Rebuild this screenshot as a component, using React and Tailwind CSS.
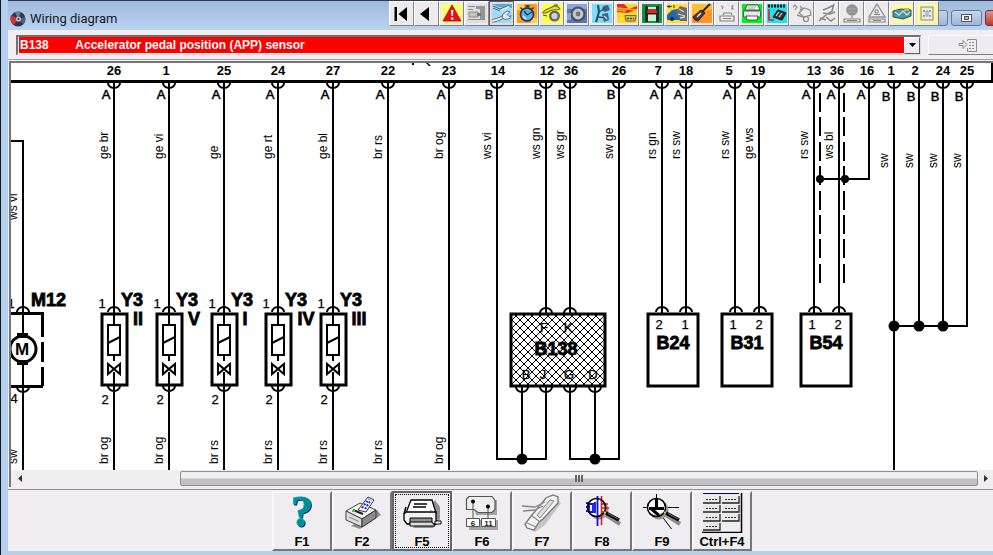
import React from "react";

const SANS = "'Liberation Sans', Arial, sans-serif";
const NARROW = "'Liberation Sans Narrow', 'Liberation Sans', Arial, sans-serif";

/* ---------- quick-access toolbar ---------- */

const Tile = ({ fill }) => <rect x="3" y="3" width="20" height="19" fill={fill} />;

const quickTools = [
  { name: "First", art: <path d="M5.500 6h2.500v14h-2.500zM18 6v14L9.500 13z" fill="#000" /> },
  { name: "Previous", art: <path d="M15 6v14L6 13z" fill="#000" /> },
  {
    name: "Warnings",
    art: (
      <>
        <Tile fill="#ffff6b" />
        <path d="M13 4l9 16H4z" fill="#e8101c" stroke="#b00" strokeWidth=".8" strokeLinejoin="round" />
        <path d="M12 9h2.400l-.6 6h-1.200zM12 16.500h2.400v2H12z" fill="#fff" />
      </>
    ),
  },
  {
    name: "Component data",
    art: (
      <>
        <Tile fill="#dedede" />
        <path d="M12 5h9v3h-9zM16 8h5v11h-5z" fill="#959595" />
        <path d="M4 5h7v1H4zM4 19h17v-1H4zM4 8h5v1H4z" fill="#8c8c8c" />
        <path d="M5 11h9v5H5z" fill="#c4c4c4" stroke="#8c8c8c" />
        <path d="M13 12h4v3h-4z" fill="#777" />
      </>
    ),
  },
  {
    name: "Repair",
    active: true,
    art: (
      <>
        <Tile fill="#a4d8f8" />
        <path d="M3 3h20v4L10 6z" fill="#5aa4dc" />
        <path d="M4 6l7 3 9-4" stroke="#e8eef2" strokeWidth="3" fill="none" />
        <path d="M4 5l7 3 9-4M4 7l7 3" stroke="#3f6f96" strokeWidth="1.200" fill="none" />
        <path d="M3 20c5-1 9-2 12-5" stroke="#5d6d78" strokeWidth="3.500" fill="none" />
        <path d="M3 20c5-1 9-2 12-5" stroke="#dfe5e8" strokeWidth="1.800" fill="none" />
        <path d="M14 13l4-3 3 1-3 2.500 2 2 2-1-1 3-5 1-3-2z" fill="#e6ebee" stroke="#5d6d78" strokeWidth=".9" />
      </>
    ),
  },
  {
    name: "Repair times",
    art: (
      <>
        <Tile fill="#ff9c1a" />
        <path d="M3 3h7v6H3zM17 17h6v5h-6z" fill="#ffd24a" />
        <circle cx="13" cy="13.500" r="6.500" fill="#5cb0e4" stroke="#1b3150" strokeWidth="1.500" />
        <path d="M11.500 4h4v3h-4z" fill="#3a4756" />
        <path d="M6.500 6.500l2 2M19.500 6.500l-2 2" stroke="#333" strokeWidth="1.500" />
        <path d="M10 10l3 4 5-3" stroke="#16304e" strokeWidth="1.300" fill="none" />
        <path d="M9 15l3 3" stroke="#d8f0ff" strokeWidth="1.500" />
      </>
    ),
  },
  {
    name: "Service",
    art: (
      <>
        <Tile fill="#ffff50" />
        <path d="M4 12c1-4 6-4 9-6s6-1 8 2l-3 1c-4-1-8 1-11 3z" fill="#dfe32e" stroke="#6a7410" strokeWidth="1.200" />
        <circle cx="15.500" cy="15" r="4.300" fill="#d2d2d2" stroke="#6a6a6a" strokeWidth="2.400" />
        <path d="M15 4h4M4 14l4 1" stroke="#4d4d19" strokeWidth="1.200" />
      </>
    ),
  },
  {
    name: "Tyres",
    art: (
      <>
        <Tile fill="#5478b4" />
        <path d="M3 3h20v5H3z" fill="#86a8d8" />
        <circle cx="14" cy="13" r="6.500" fill="#c4c6cc" stroke="#4a4f5c" strokeWidth="2.200" />
        <circle cx="14" cy="13" r="2.400" fill="#71757f" />
        <path d="M3 12h4v7H3z" fill="#8ba6cc" />
      </>
    ),
  },
  {
    name: "Suspension",
    art: (
      <>
        <Tile fill="#80dcf8" />
        <path d="M9 4l1 7-3 10" stroke="#2c4f70" strokeWidth="2.200" fill="none" />
        <path d="M14 5l5-1 2 5-5 2-3-2zM13 13l6-1 1 7-5 2z" fill="#44617c" />
        <path d="M10 11l6-4M9 16l8 1" stroke="#2c4f70" strokeWidth="1.300" />
        <path d="M15 15l3 3" stroke="#cfe6ef" strokeWidth="1.300" />
      </>
    ),
  },
  {
    name: "Electrical",
    art: (
      <>
        <Tile fill="#ffd928" />
        <path d="M3 3h7l5 5 8-3v3l-9 4-11-1z" fill="#e22c18" />
        <path d="M3 7l20 2M3 9l9 1" stroke="#ffb02c" strokeWidth="1.300" />
        <path d="M11 14.500h11l-1 5.500H12z" fill="#d8c25e" stroke="#776322" />
        <path d="M13 17.500h7" stroke="#524418" strokeWidth="1.500" strokeDasharray="2 1" />
      </>
    ),
  },
  {
    name: "Lift points",
    art: (
      <>
        <Tile fill="#169146" />
        <path d="M6 6h14v14H6z" fill="#cfe9dc" />
        <path d="M6 5h3v16H6zM17 5h3v16h-3z" fill="#1c2c28" />
        <path d="M9 8h8l1 4H8z" fill="#d62828" />
        <path d="M8 12h10v1.500H8z" fill="#222" />
      </>
    ),
  },
  {
    name: "Engine management",
    art: (
      <>
        <Tile fill="#ffdf32" />
        <path d="M3 14l5-5 6-1 3 4v7H3z" fill="#2468b0" />
        <path d="M12 11l4-6 7 2v13h-7z" fill="#6b6b6b" />
        <path d="M15 8l5 3M14 13l7 2M16 17l5-1" stroke="#d8d8d8" strokeWidth="1.300" />
        <path d="M5 4v3M3 5.500h5M10 4v3" stroke="#333" />
        <circle cx="8" cy="18" r="2" fill="#14273d" />
      </>
    ),
  },
  {
    name: "Remote keys",
    art: (
      <>
        <Tile fill="#ff9524" />
        <path d="M3 3h20v5L3 14z" fill="#ffc02e" />
        <path d="M6 19l-2-3 8-7 4 3-7 8z" fill="#4b4038" stroke="#201810" />
        <path d="M13 11l8-8" stroke="#2b2118" strokeWidth="2" />
        <path d="M8 16l4-4" stroke="#e8dccc" strokeWidth="1.500" />
      </>
    ),
  },
  {
    name: "Key programming",
    off: true,
    art: (
      <>
        <path d="M7 5l2 1-1 2M17 5h2l-1 2 1 1h-2" stroke="#8f8f8f" fill="none" strokeWidth="1.200" />
        <path d="M9 14l1-2h7l1 2M6 15h14v5H6zM9 17.500h8" fill="none" stroke="#868686" strokeWidth="1.200" />
      </>
    ),
  },
  {
    name: "Print",
    art: (
      <>
        <Tile fill="#00f01a" />
        <path d="M8 4h11l2 5H6z" fill="#fff" stroke="#333" strokeWidth=".8" />
        <path d="M4.500 10h17v6h-17z" fill="#e9e9e9" stroke="#444" strokeWidth=".8" />
        <path d="M7 15h12l-1 4H8z" fill="#fff" stroke="#333" strokeWidth=".8" />
        <path d="M9 6h8M9 8h7" stroke="#888" strokeWidth=".8" />
      </>
    ),
  },
  {
    name: "Trouble codes",
    art: (
      <>
        <Tile fill="#22e2ee" />
        <path d="M4 5h18" stroke="#111" strokeWidth="3" strokeDasharray="2 1" />
        <path d="M5 8v11h5" stroke="#e02020" strokeWidth="1.600" fill="none" />
        <path d="M9 16l5-7 8 3-4 7z" fill="#333" stroke="#000" />
        <path d="M12 15l3-4M15 16l3-4" stroke="#ddd" strokeWidth="1.200" />
      </>
    ),
  },
  {
    name: "Fault finding",
    off: true,
    art: (
      <>
        <path d="M4 6l2-2 2 2-2 3M11 5l2 2-2 2M10 12l5-5 6 2 1 5-7 2z" fill="none" stroke="#8f8f8f" strokeWidth="1.200" />
        <circle cx="17" cy="18" r="2.500" fill="none" stroke="#868686" strokeWidth="1.200" />
        <path d="M8 14l6 2" stroke="#949494" strokeWidth="1.500" />
      </>
    ),
  },
  {
    name: "Timing belts",
    off: true,
    art: (
      <path d="M20 3l-2 7-6 4-7 6M9 9l5-2 6-3M9 12l7 1 5-2M12 16l5 4 4-3M6 17l6 2" fill="none" stroke="#888" strokeWidth="1.500" />
    ),
  },
  {
    name: "Airbags",
    off: true,
    art: (
      <>
        <circle cx="13" cy="9" r="5.800" fill="#929292" />
        <path d="M9 8h8M9 11h7" stroke="#aaa" />
        <path d="M13 15v2M5 18h16v3H5zM8 19.500h10" fill="none" stroke="#868686" strokeWidth="1.200" />
      </>
    ),
  },
  {
    name: "ABS",
    off: true,
    art: (
      <>
        <path d="M13 3l8 13H5z" fill="none" stroke="#959595" strokeWidth="1.400" />
        <path d="M11 9h3v3h-3zM10 13.500h6" fill="none" stroke="#868686" />
        <path d="M5 18h16v3H5zM9 19.500h8" fill="none" stroke="#868686" strokeWidth="1.200" />
      </>
    ),
  },
  {
    name: "Component locations",
    art: (
      <>
        <Tile fill="#fdf8a4" />
        <path d="M4 10l8-2 10 1v6l-8 3-10-2z" fill="#4b93a8" stroke="#26586b" />
        <path d="M6 11l4 3 4-4 4 4 3-3" fill="none" stroke="#b8dbd8" strokeWidth="1.400" />
        <path d="M15 7h5v3h-5z" fill="#cfae46" />
      </>
    ),
  },
  {
    name: "Fuses",
    art: (
      <>
        <Tile fill="#fffa8c" />
        <rect x="7" y="6" width="12" height="13" fill="#e8e8e8" stroke="#8a8a8a" />
        <path d="M10 9v2M10 14v2M16 9v2M16 14v2" stroke="#888" strokeWidth="1.500" />
        <path d="M12 10h2v5h-2z" fill="none" stroke="#999" />
      </>
    ),
  },
];

function QuickToolbar() {
  return (
    <nav aria-label="Quick access" className="z-10 flex shrink-0 bg-[#eceaec]">
      {quickTools.map((t) => (
        <button
          key={t.name}
          type="button"
          aria-label={t.name}
          disabled={t.off}
          className={
            t.active
              ? "h-[25px] w-[25px] border border-[#606060] bg-[#dddddd]"
              : "h-[25px] w-[25px] border border-l-white border-t-white border-r-[#858585] border-b-[#858585] bg-[#eceaec]"
          }
        >
          <svg viewBox="1 1 23 23" className="block h-[23px] w-[23px]" aria-hidden="true">
            {t.art}
          </svg>
        </button>
      ))}
    </nav>
  );
}

/* ---------- title bar ---------- */

function TitleBar() {
  return (
    <header className="flex h-[30px] items-start border-t border-[#30384a] bg-linear-to-b from-[#9fb9dc] to-[#b9d3f0]">
      <div className="flex flex-1 items-center gap-1 pt-[10px] pl-[2px]">
        <svg viewBox="0 0 16 16" className="h-4 w-4" aria-hidden="true">
          <circle cx="8" cy="8" r="7.500" fill="#2d3648" />
          <path d="M8 8L1 4a8 8 0 0 0 3 10z" fill="#d0343c" />
          <path d="M8 8L5 1a8 8 0 0 1 6 0z" fill="#6b7f9e" />
          <path d="M8 8l7-2a8 8 0 0 1-2 7z" fill="#50607c" />
          <circle cx="8.500" cy="8" r="2.600" fill="#b9bec8" />
          <circle cx="8.500" cy="8" r="1" fill="#333" />
        </svg>
        <h1 className="text-[13px] leading-4 text-[#15181f] font-['Roboto',sans-serif]">Wiring diagram</h1>
      </div>
      <QuickToolbar />
      <div className="-mr-[38px] -ml-[34px] flex shrink-0 gap-[3px] pt-[9px]">
        <button type="button" aria-label="Minimize" className="h-4 w-[43px] rounded-[3px] border border-[#62779a] bg-linear-to-b from-[#c4d5ea] to-[#9db6d6]" />
        <button type="button" aria-label="Restore" className="flex h-4 w-[31px] items-center justify-center rounded-[3px] border border-[#62779a] bg-linear-to-b from-[#c8d8ec] to-[#9db6d6]">
          <span className="flex h-2 w-[11px] items-center justify-center border border-[#4b5468] bg-white">
            <span className="h-1 w-[5px] border border-[#4b5468] bg-[#9db6d6]" />
          </span>
        </button>
        <button type="button" aria-label="Close" className="h-4 w-[46px] rounded-[3px] border border-[#7a2f2c] bg-linear-to-b from-[#e0918a] to-[#b8382c]" />
      </div>
    </header>
  );
}

/* ---------- component selector ---------- */

function SelectorRow() {
  return (
    <div className="-mr-[15px] flex h-[30px] items-center gap-[7px] border-b border-[#a4a2a4] pl-2">
      <div className="flex h-5 flex-1 border-t-2 border-r border-b border-l-2 border-t-[#707070] border-r-[#dcdcdc] border-b-[#dcdcdc] border-l-[#707070] bg-white pl-px">
        <select
          aria-label="Component"
          className="h-4 flex-1 appearance-none bg-[#ff0000] pl-px text-[12px] leading-4 font-bold text-white font-['Liberation_Sans',Arial,sans-serif]"
        >
          <option>{"B138\u00a0\u00a0\u00a0\u00a0\u00a0\u00a0\u00a0\u00a0Accelerator pedal position (APP) sensor"}</option>
        </select>
        <span className="pointer-events-none flex w-4 items-center justify-center border border-l-white border-t-white border-r-[#606060] border-b-[#606060] bg-[#efedef]">
          <svg viewBox="0 0 7 4" className="h-1 w-[7px]" aria-hidden="true">
            <path d="M0 0h7L3.500 4z" fill="#000" />
          </svg>
        </span>
      </div>
      <button
        type="button"
        aria-label="Go to list"
        disabled
        className="flex h-5 w-20 shrink-0 items-center justify-center border border-l-white border-t-white border-r-[#808080] border-b-[#808080] bg-[#eeecee]"
      >
        <svg viewBox="0 0 20 14" className="h-[14px] w-5" aria-hidden="true" fill="none" stroke="#8e8e8e">
          <path d="M1 5.500h4v-3l4 4-4 4v-3H1z" />
          <path d="M9.500 3V1.500h9v12h-9V10" />
          <path d="M11 4.500h6M11 7.500h6M11 10.500h6" strokeDasharray="2 1" />
        </svg>
      </button>
    </div>
  );
}

/* ---------- wiring diagram ---------- */

const pins = [
  { x: 114, nx: 114, n: "26", s: "A", w: "ge br", to: 324 },
  { x: 169, nx: 166, n: "1", s: "A", w: "ge vi", to: 324 },
  { x: 224, nx: 224, n: "25", s: "A", w: "ge", to: 324 },
  { x: 278, nx: 278, n: "24", s: "A", w: "ge rt", to: 324 },
  { x: 333, nx: 333, n: "27", s: "A", w: "ge bl", to: 324 },
  { x: 388, nx: 388, n: "22", s: "A", w: "br rs", to: 470 },
  { x: 449, nx: 449, n: "23", s: "A", w: "br og", to: 470 },
  { x: 497, nx: 498, n: "14", s: "B", w: "ws vi", to: 459 },
  { x: 546, nx: 547, n: "12", s: "B", w: "ws gn", to: 313 },
  { x: 570, nx: 571, n: "36", s: "B", w: "ws gr", to: 313 },
  { x: 619, nx: 619, n: "26", s: "B", w: "sw ge", to: 459 },
  { x: 662, nx: 658, n: "7", s: "A", w: "rs gn", to: 313 },
  { x: 686, nx: 686, n: "18", s: "A", w: "rs sw", to: 313 },
  { x: 735, nx: 729, n: "5", s: "A", w: "rs sw", to: 313 },
  { x: 759, nx: 758, n: "19", s: "A", w: "ge ws", to: 313 },
  { x: 814, nx: 814, n: "13", s: "A", w: "rs sw", to: 313 },
  { x: 839, nx: 837, n: "36", s: "A", w: "ws bl", to: 313 },
  { x: 869, nx: 867, n: "16", s: "A", w: "", to: 179 },
  { x: 894, nx: 891, n: "1", s: "B", w: "sw", to: 470, low: true },
  { x: 919, nx: 915, n: "2", s: "B", w: "sw", to: 326, low: true },
  { x: 943, nx: 943, n: "24", s: "B", w: "sw", to: 326, low: true },
  { x: 967, nx: 967, n: "25", s: "B", w: "sw", to: 326, low: true },
];

const injectors = [
  { x: 114, id: "II", idX: 138, w: "br og" },
  { x: 169, id: "V", idX: 194, w: "br og" },
  { x: 224, id: "I", idX: 245, w: "br rs" },
  { x: 278, id: "IV", idX: 306, w: "br rs" },
  { x: 333, id: "III", idX: 359, w: "br rs" },
];

const sensors = [
  { x: 648, name: "B24", left: "2", right: "1" },
  { x: 722, name: "B31", left: "1", right: "2" },
  { x: 801, name: "B54", left: "1", right: "2" },
];

const Wire = ({ d }) => <path d={d} fill="none" stroke="#000" strokeWidth="2" shapeRendering="crispEdges" />;
const SocketDown = ({ x, y }) => <path d={`M${x - 6} ${y}a6 5 0 0 0 12 0`} fill="none" stroke="#000" strokeWidth="2" />;
const SocketUp = ({ x, y }) => <path d={`M${x - 6} ${y}a6 5 0 0 1 12 0`} fill="none" stroke="#000" strokeWidth="2" />;

const WireLabel = ({ x, y, children }) => (
  <text transform={`translate(${x} ${y}) rotate(-90)`} fontFamily={NARROW} fontSize="12">
    {children}
  </text>
);

const Num = ({ x, y, children }) => (
  <text x={x} y={y} fontSize="13" textAnchor="middle" stroke="#000" strokeWidth=".25">
    {children}
  </text>
);

const Name = ({ x, y, anchor = "middle", children }) => (
  <text x={x} y={y} fontSize="18" fontWeight="700" textAnchor={anchor} stroke="#000" strokeWidth=".8">
    {children}
  </text>
);

function Diagram() {
  return (
    <svg
      viewBox="11 63 982 407"
      preserveAspectRatio="xMinYMin slice"
      className="block h-[407px] w-full bg-white"
      fontFamily={SANS}
      fill="#000"
      role="img"
      aria-label="Engine management wiring diagram"
    >
      <defs>
        <pattern id="hatch" width="8" height="8" patternUnits="userSpaceOnUse">
          <path d="M0 0l8 8M8 0L0 8" stroke="#000" strokeWidth="1" />
        </pattern>
      </defs>

      {/* control unit edge */}
      <path d="M11 80h982v3H11zM991 63h2v20h-2z" shapeRendering="crispEdges" />
      <path d="M412 63h2v2h-2zM426 63h2l3 3h-2z" />

      {pins.map((p) => (
        <g key={p.x}>
          <text x={p.nx} y="75" fontSize="13" fontWeight="700" textAnchor="middle">{p.n}</text>
          <SocketDown x={p.x} y={83} />
          <Wire d={`M${p.x} 82V${p.to}`} />
          <text x={p.x - 8} y={p.low ? 101 : 99} fontSize="13" textAnchor="middle" stroke="#000" strokeWidth=".5">
            {p.s}
          </text>
          {p.w && <WireLabel x={p.x - 6} y={p.low ? 168 : 159}>{p.w}</WireLabel>}
        </g>
      ))}

      {/* M12 motor */}
      <Wire d="M11 141H23V334M23 364V470" />
      <WireLabel x={17} y={220}>ws vi</WireLabel>
      <WireLabel x={17} y={464}>sw</WireLabel>
      <path d="M8 313H42V337M42 342V362M42 367V386M43 386H8" fill="none" stroke="#000" strokeWidth="3" shapeRendering="crispEdges" />
      <SocketUp x={23} y={312} />
      <SocketDown x={23} y={387} />
      <circle cx="23" cy="349" r="13" fill="#fff" stroke="#000" strokeWidth="3" />
      <path d="M17 333h11v5H17zM17 360h11v5H17z" />
      <text x="22" y="355" fontSize="17" fontWeight="700" textAnchor="middle">M</text>
      <Num x={11} y={308}>1</Num>
      <Num x={14} y={403}>4</Num>
      <Name x={31} y={306} anchor="start">M12</Name>

      {/* injectors */}
      {injectors.map(({ x, id, idX, w }) => (
        <g key={id}>
          <rect x={x - 12} y="314" width="25" height="71" fill="none" stroke="#000" strokeWidth="3" />
          <rect x={x - 6} y="325" width="12" height="30" fill="#fff" stroke="#000" strokeWidth="2" />
          <path d={`M${x - 6} 343l12-6`} stroke="#000" strokeWidth="2" />
          <Wire d={`M${x} 355v6M${x} 372V470`} />
          <path d={`M${x - 6} 364v10l12-10v10z`} fill="none" stroke="#000" strokeWidth="2" />
          <SocketUp x={x} y={312} />
          <SocketDown x={x} y={386} />
          <Num x={x - 12} y={308}>1</Num>
          <Num x={x - 9} y={404}>2</Num>
          <Name x={x + 7} y={306} anchor="start">Y3</Name>
          <Name x={idX} y={325}>{id}</Name>
          <WireLabel x={x - 6} y={464}>{w}</WireLabel>
        </g>
      ))}
      <WireLabel x={382} y={464}>br rs</WireLabel>
      <WireLabel x={443} y={464}>br og</WireLabel>

      {/* B138 accelerator pedal sensor */}
      <rect x="511" y="314" width="94" height="72" fill="#fff" />
      <rect x="511" y="314" width="94" height="72" fill="url(#hatch)" stroke="#000" strokeWidth="3" />
      <SocketUp x={546} y={313} />
      <SocketUp x={570} y={313} />
      {[522, 546, 570, 595].map((x) => (
        <SocketDown key={x} x={x} y={387} />
      ))}
      <Wire d="M497 458V459H546V387M522 387V459M570 387V459H619V458M595 387V459" />
      <circle cx="522" cy="459" r="5.500" />
      <circle cx="595" cy="459" r="5.500" />
      <Num x={544} y={332}>F</Num>
      <Num x={568} y={332}>K</Num>
      <Name x={556} y={355}>B138</Name>
      <Num x={526} y={379}>B</Num>
      <Num x={543} y={379}>J</Num>
      <Num x={569} y={379}>G</Num>
      <Num x={593} y={379}>D</Num>

      {sensors.map(({ x, name, left, right }) => (
        <g key={name}>
          <rect x={x} y="314" width="50" height="72" fill="none" stroke="#000" strokeWidth="3" />
          <SocketUp x={x + 14} y={312} />
          <SocketUp x={x + 38} y={312} />
          <Num x={x + 11} y={329}>{left}</Num>
          <Num x={x + 37} y={329}>{right}</Num>
          <Name x={x + 25} y={349}>{name}</Name>
        </g>
      ))}

      {/* screening and earth joints */}
      <path d="M820 93V284M844 93V284" stroke="#000" strokeWidth="2" strokeDasharray="19 5.400" shapeRendering="crispEdges" />
      <Wire d="M820 179H870M893 326H968" />
      <circle cx="820" cy="179" r="4" />
      <circle cx="845" cy="179" r="4" />
      <circle cx="894" cy="326" r="5.500" />
      <circle cx="919" cy="326" r="5.500" />
      <circle cx="943" cy="326" r="5.500" />
    </svg>
  );
}

function HorizontalScrollbar() {
  return (
    <div className="flex h-[17px] items-start bg-[#efedef]">
      <button type="button" aria-label="Scroll left" className="flex h-4 w-[17px] shrink-0 items-center justify-center">
        <svg viewBox="0 0 4 7" className="h-[7px] w-1" aria-hidden="true"><path d="M4 0v7L0 3.500z" fill="#333" /></svg>
      </button>
      <div className="flex h-4 flex-1 justify-end pt-px">
        <div className="flex w-[84%] items-center justify-center gap-px rounded-[2px] border border-[#8f8f8f] bg-linear-to-b from-[#f0eef0] from-45% to-[#c2c0c4] to-55%">
          <span className="h-[7px] w-[2px] bg-[#666]" />
          <span className="h-[7px] w-[2px] bg-[#666]" />
          <span className="h-[7px] w-[2px] bg-[#666]" />
        </div>
      </div>
      <button type="button" aria-label="Scroll right" className="flex h-4 w-[15px] shrink-0 items-center justify-center">
        <svg viewBox="0 0 4 7" className="h-[7px] w-1" aria-hidden="true"><path d="M0 0v7l4-3.500z" fill="#333" /></svg>
      </button>
    </div>
  );
}

/* ---------- function keys ---------- */

const Magnifier = ({ children }) => (
  <>
    <path d="M34 24l14 9" stroke="#8c8c8c" strokeWidth="4" />
    <circle cx="27" cy="19" r="9.500" fill="#9a9a9a" />
    <circle cx="24.500" cy="16.500" r="9" fill="#fff" />
    {children}
    <circle cx="24.500" cy="16.500" r="9" fill="none" stroke="#000" strokeWidth="1.500" />
    <path d="M32 21l3 2" stroke="#e8d020" strokeWidth="2" />
    <path d="M34 22l13 7" stroke="#000" strokeWidth="3.500" />
    <path d="M36 22.500l10 5.500" stroke="#999" strokeWidth=".8" />
  </>
);

const keypadCells = [
  [11, 5], [30, 5], [11, 14], [30, 14], [11, 23], [30, 23], [11, 32],
];

const functionKeys = [
  {
    key: "F1",
    name: "Help",
    art: (
      <text
        x="30"
        y="35"
        fontFamily="'Liberation Serif', serif"
        fontSize="44"
        fontWeight="700"
        textAnchor="middle"
        fill="#008a90"
        stroke="#00a8ae"
        className="drop-shadow-[1px_1px_0_#0a2a78]"
      >
        ?
      </text>
    ),
  },
  {
    key: "F2",
    name: "Print page",
    art: (
      <>
        <path d="M19 35l9 3 21-14-4-5z" fill="#909090" />
        <path d="M14 20l14-8 16 7-14 9z" fill="#f2f2f2" stroke="#444" />
        <path d="M14 20v9l16 7v-8z" fill="#dcdcdc" stroke="#444" />
        <path d="M30 28l14-9v8l-14 9z" fill="#8b8b8b" stroke="#333" />
        <path d="M26 19l10-13 6 3-8 12z" fill="#fff" stroke="#333" />
        <path d="M30 17l7-9M33 18l6-9" stroke="#1c28d8" strokeWidth="2" strokeDasharray="2 1.500" />
        <path d="M21 19l5 2 5 2" stroke="#222" strokeWidth="2" fill="none" />
        <path d="M20 20h3" stroke="#20e020" strokeWidth="2" />
        <path d="M17 26l10 4.500" stroke="#888" />
      </>
    ),
  },
  {
    key: "F5",
    name: "Print",
    current: true,
    art: (
      <>
        <path d="M21 37h20l7-9V16l-5-7z" fill="#909090" />
        <path d="M19 9h21l4 13H14z" fill="#fff" stroke="#000" strokeWidth="1.300" />
        <path d="M22 13h13M21 16h13" stroke="#000" strokeWidth="1.300" />
        <path d="M14 21h30v12H15l-3-4v-6z" fill="#f4f4f4" stroke="#000" strokeWidth="1.300" />
        <path d="M18 27h22v5H18z" fill="#909090" stroke="#000" />
        <path d="M18 31h22l3 4H18z" fill="#ddd" stroke="#000" />
        <path d="M43 30h6v3h-6z" fill="#fff" stroke="#000" />
        <path d="M14 16l-2 7" stroke="#000" strokeWidth="1.500" />
        <path d="M39 19v2" stroke="#d22" />
      </>
    ),
  },
  {
    key: "F6",
    name: "Connector pins",
    art: (
      <>
        <path d="M20 9h25v15H24z" fill="#a4a4a4" />
        <path d="M17 29h29v10H17z" fill="#a4a4a4" />
        <path d="M17 5.500h23l3 4v9l-3 3H26l-4-3h-7.500V8z" fill="#efefef" stroke="#555" strokeWidth="1.200" />
        <path d="M21 11v17M36 16v12" stroke="#555" />
        <circle cx="21" cy="10.500" r="2" />
        <circle cx="36" cy="15.500" r="2" />
        <path d="M14.500 27.500h13v8h-13zM29.500 27.500h14v8h-14z" fill="#fff" stroke="#555" />
        <g fontFamily={SANS} fontSize="8" fontWeight="700" textAnchor="middle" fill="#222">
          <text x="21" y="34.500">6</text>
          <text x="36.500" y="34.500">11</text>
        </g>
      </>
    ),
  },
  {
    key: "F7",
    name: "Connect tester",
    art: (
      <>
        <path d="M19 39l9-8 18-22 3 3-16 22-10 7z" fill="#c4c4c4" />
        <path d="M13 33l7-9 14-17 7-3 5 2v6L31 28l-4 3-5 8-7-2z" fill="#f4f4f4" stroke="#777" strokeWidth="1.300" />
        <path d="M25 24L38 9l4 1L28 27z" fill="#dedede" stroke="#888" />
        <path d="M15 32l9 4M20 25l7 5" stroke="#888" strokeWidth="1.300" />
        <path d="M33 11l-10 5-13-1M31 15l-8 4-12 1" fill="none" stroke="#888" strokeWidth="1.300" />
      </>
    ),
  },
  {
    key: "F8",
    name: "Highlight component",
    art: (
      <Magnifier>
        <path d="M25.500 5v30M17 13h4v8h-4zM14 12h4M14 16h4M14 20h4M22 12h1v9h-1" fill="none" stroke="#1010e8" strokeWidth="1.800" />
        <path d="M29.500 5v29M30 13h6M30 17h7M30 21h5" stroke="#e81818" strokeWidth="1.600" />
      </Magnifier>
    ),
  },
  {
    key: "F9",
    name: "Zoom",
    art: (
      <>
        <path d="M11 16.500H47M24.500 3v15l15 20" stroke="#000" fill="none" />
        <Magnifier>
          <path d="M24.500 7.500v10M17 17.500h15M19 17.500l8 7" stroke="#000" strokeWidth="3" />
        </Magnifier>
      </>
    ),
  },
  {
    key: "Ctrl+F4",
    name: "Function keys",
    art: (
      <>
        <path d="M11 2.500h36" stroke="#000080" />
        <path d="M49.500 2v39.500H10" fill="none" stroke="#000" strokeWidth="1.500" />
        {keypadCells.map(([x, y]) => (
          <g key={`${x}-${y}`}>
            <rect x={x} y={y} width="17" height="7" fill="#e8e8e8" />
            <path d={`M${x} ${y + 7}h17v-7`} fill="none" stroke="#222" strokeWidth="1.300" />
            <path d={`M${x + 3} ${y + 3.5}h11`} stroke="#333" strokeDasharray="2 1" />
          </g>
        ))}
      </>
    ),
  },
];

function FunctionKeys() {
  return (
    <nav aria-label="Function keys" className="flex justify-center border-t border-[#8e8c8e] pt-px pl-[22px]">
      {functionKeys.map((f) => (
        <button
          key={f.key}
          type="button"
          title={f.name}
          className={
            f.current
              ? "flex h-[60px] w-[60px] flex-col items-center border-2 border-[#666666] bg-[#efedef] outline-1 -outline-offset-4 outline-dotted outline-black"
              : "flex h-[60px] w-[60px] flex-col items-center border-2 border-t-[#faf9fa] border-r-[#777777] border-b-[#777777] border-l-[#faf9fa] bg-[#efedef]"
          }
        >
          <svg viewBox="2 2 56 40" className="block h-10 w-[56px] shrink-0" aria-hidden="true">
            {f.art}
          </svg>
          <span className="mt-[2px] pl-px text-[13px] leading-[14px] font-bold text-black font-['Liberation_Sans',Arial,sans-serif]">
            {f.key}
          </span>
        </button>
      ))}
    </nav>
  );
}

export default function App() {
  return (
    <div className="min-h-screen overflow-hidden border-l border-[#14161c] bg-[#b5cfee] pl-[7px]">
      <TitleBar />
      <main className="overflow-hidden bg-[#f0eef0]">
        <SelectorRow />
        <section className="mt-px mb-[2px] ml-px border-t-2 border-l-2 border-[#777577]">
          <Diagram />
          <HorizontalScrollbar />
        </section>
        <FunctionKeys />
      </main>
    </div>
  );
}
